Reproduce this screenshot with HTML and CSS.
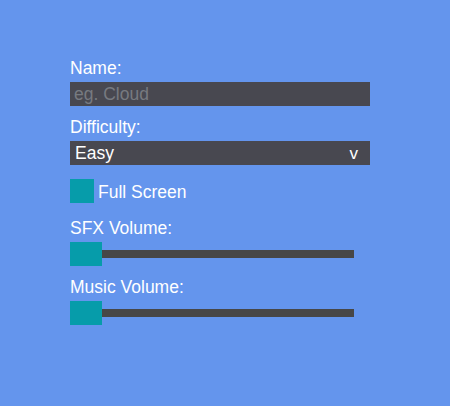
FILE: index.html
```html
<!DOCTYPE html>
<html>
<head>
<meta charset="utf-8">
<link rel="stylesheet" href="styles.css">
</head>
<body>
<div class="form">
  <div class="label">Name:</div>
  <input class="field" type="text" placeholder="eg. Cloud">
  <div class="label gap-field">Difficulty:</div>
  <div class="field select"><span>Easy</span><span class="arrow">v</span></div>
  <div class="check-row">
    <span class="check"></span><span class="check-label">Full Screen</span>
  </div>
  <div class="label gap-check">SFX Volume:</div>
  <div class="slider"><span class="thumb"></span><span class="track"></span></div>
  <div class="label gap-slider">Music Volume:</div>
  <div class="slider"><span class="thumb"></span><span class="track"></span></div>
</div>
</body>
</html>
```
FILE: styles.css
```css
html, body {
  margin: 0;
  padding: 0;
  background: #6495ed;
  width: 450px;
  height: 406px;
  overflow: hidden;
}
.form {
  display: flex;
  flex-direction: column;
  align-items: flex-start;
  padding: 58px 0 0 70px;
  font-family: "Liberation Sans", Arial, sans-serif;
  font-size: 17.5px;
  color: #ffffff;
}
.label {
  line-height: 20px;
  height: 20px;
  margin-bottom: 4px;
}
.gap-field { margin-top: 11px; }
.gap-check { margin-top: 15px; }
.gap-slider { margin-top: 11px; }
.field {
  box-sizing: border-box;
  width: 300px;
  height: 24px;
  margin: 0;
  border: none;
  outline: none;
  background: #484850;
  color: #ffffff;
  font-family: "Liberation Sans", Arial, sans-serif;
  font-size: 17.5px;
  padding: 1px 4px 0;
}
.field::placeholder { color: #777a80; }
.select {
  display: flex;
  align-items: center;
  justify-content: space-between;
  padding: 1px 12px 0 5px;
}
.arrow { font-size: 17px; }
.check-row {
  display: flex;
  align-items: center;
  gap: 4px;
  margin-top: 14px;
}
.check {
  width: 24px;
  height: 24px;
  background: #069caa;
}
.check-label { line-height: 20px; padding-top: 1px; }
.slider {
  display: flex;
  align-items: center;
  width: 284px;
  height: 24px;
}
.thumb {
  width: 32px;
  height: 24px;
  background: #069caa;
  flex: none;
}
.track {
  flex: 1;
  height: 8px;
  background: #474747;
}
```
